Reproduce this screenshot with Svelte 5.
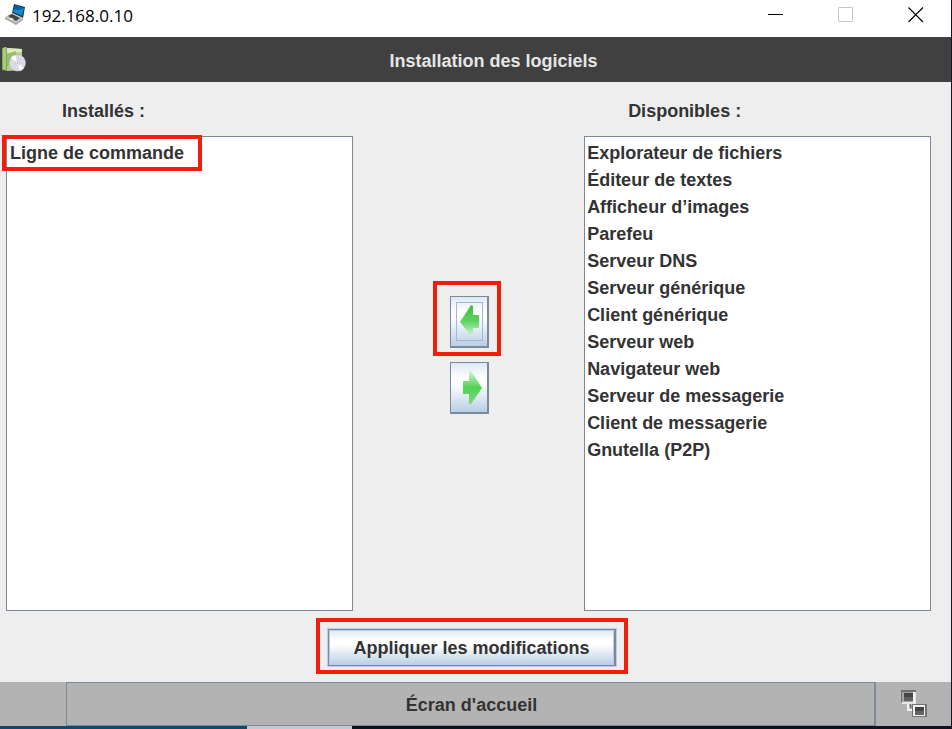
<script lang="ts">
	let installed: string[] = ['Ligne de commande'];
	let available: string[] = [
		'Explorateur de fichiers',
		'Éditeur de textes',
		'Afficheur d’images',
		'Parefeu',
		'Serveur DNS',
		'Serveur générique',
		'Client générique',
		'Serveur web',
		'Navigateur web',
		'Serveur de messagerie',
		'Client de messagerie',
		'Gnutella (P2P)'
	];
	let selected = '';

	function install() {
		if (!available.includes(selected)) return;
		available = available.filter((app) => app !== selected);
		installed = [...installed, selected];
	}

	function uninstall() {
		if (!installed.includes(selected)) return;
		installed = installed.filter((app) => app !== selected);
		available = [...available, selected];
	}
</script>

<div class="window">
	<header class="titlebar">
		<svg class="laptop" width="20" height="22" viewBox="0 0 20 22" aria-hidden="true">
			<path d="M9 1 20 4 18 15 7 10z" fill="#17344f" />
			<path d="M10 2 19 5 17 13 8 9z" fill="#1687cc" />
			<path d="M10 2 19 5 13 7 9 6z" fill="#0b5d9c" />
			<path d="M0 14 7 10 18 15 11 21z" fill="#c9c6c1" />
			<path d="M3 13 7 11 15 15 11 18z" fill="#454442" />
			<path d="M0 14 11 20 18 15v2l-7 5L0 16z" fill="#a9a7a4" />
			<path d="m4 16 3-1 2 1-3 1z" fill="#f2f2f2" />
		</svg>
		<h1>192.168.0.10</h1>
		<div class="window-buttons">
			<button aria-label="Réduire">
				<svg width="16" height="16" viewBox="0 0 16 16"><path d="M0 7.5h15" stroke="#000" /></svg>
			</button>
			<button aria-label="Agrandir" disabled>
				<svg width="16" height="16" viewBox="0 0 16 16"><path d="M.5.5h14v14H.5z" fill="none" stroke="#c8c8c8" /></svg>
			</button>
			<button aria-label="Fermer">
				<svg width="16" height="16" viewBox="0 0 16 16"><path d="m.5.5 14.500 14.500m0-14.500L.5 15" stroke="#000" stroke-width="1.100" /></svg>
			</button>
		</div>
	</header>

	<div class="app-header">
		<svg width="24" height="28" viewBox="0 0 24 28" aria-hidden="true">
			<path d="M0 2 5 1v24l-5-1z" fill="#7fa557" />
			<path d="M1 2 4 1v23l-3-1z" fill="#a9cc7c" />
			<path d="M5 2l15 1v21l-15 1z" fill="#b3cf8d" />
			<path d="M5 2l15 1v3L5 7z" fill="#dcebc6" />
			<path d="m5 8 9-3v6L5 21z" fill="#98be6e" />
			<circle cx="15.500" cy="17" r="8" fill="#dcdce8" stroke="#c4c4d0" stroke-width=".6" />
			<path d="M15.500 17 9 12a8 8 0 0 1 4-3zM15.500 17l6.500 5a8 8 0 0 1-4 3z" fill="#fff" />
			<path d="m15.500 17 4-7a8 8 0 0 1 3 3zM15.500 17l-4 7a8 8 0 0 1-3-3z" fill="#d6d5ec" />
			<circle cx="15.500" cy="17" r="2.200" fill="#f6f6f6" stroke="#bbb" stroke-width=".6" />
			<circle cx="15.500" cy="17" r=".8" fill="#8a8a8a" />
		</svg>
		<h2>Installation des logiciels</h2>
	</div>

	<main>
		<section class="column">
			<h3 id="installed-label">Installés :</h3>
			<ul class="installed" aria-labelledby="installed-label">
				{#each installed as app, i (app)}
					<li>
						<button class="item" class:marked={i === 0} class:selected={app === selected} on:click={() => (selected = app)}>
							{app}
						</button>
					</li>
				{/each}
			</ul>
		</section>

		<div class="transfer">
			<button class="metal arrow marked focused" aria-label="Installer" on:click={install}>
				<svg width="25" height="37" viewBox="0 0 25 37">
					<defs>
						<linearGradient id="green-left" x1="0" y1="0" x2="0" y2="1">
							<stop offset="0" stop-color="#3dbd45" />
							<stop offset=".5" stop-color="#5ad35c" />
							<stop offset="1" stop-color="#d4f3d5" />
						</linearGradient>
					</defs>
					<path d="M3 19 14 2l2 1v9h6v13h-6v8h-2z" fill="url(#green-left)" />
				</svg>
			</button>
			<button class="metal arrow" aria-label="Désinstaller" on:click={uninstall}>
				<svg width="25" height="37" viewBox="0 0 25 37">
					<defs>
						<linearGradient id="green-right" x1="0" y1="0" x2="0" y2="1">
							<stop offset="0" stop-color="#d4f3d5" />
							<stop offset=".5" stop-color="#52d155" />
							<stop offset="1" stop-color="#7ad67d" />
						</linearGradient>
					</defs>
					<path d="M25 19 14 2h-2v10H6v13h6v10h2z" fill="url(#green-right)" />
				</svg>
			</button>
		</div>

		<section class="column">
			<h3 id="available-label">Disponibles :</h3>
			<ul aria-labelledby="available-label">
				{#each available as app (app)}
					<li>
						<button class="item" class:selected={app === selected} on:click={() => (selected = app)}>
							{app}
						</button>
					</li>
				{/each}
			</ul>
		</section>
	</main>

	<div class="actions">
		<button class="metal apply marked">Appliquer les modifications</button>
	</div>

	<footer>
		<button class="home">Écran d'accueil</button>
		<button class="network" aria-label="Réseau">
			<svg width="28" height="28" viewBox="0 0 28 28">
				<path d="M8 14v6h6" fill="none" stroke="#f2f2f2" stroke-width="2" />
				<path d="M10.500 14v3h3" fill="none" stroke="#666" />
				<path d="M1 0h15v14H1z" fill="#6f7071" />
				<path d="M2 12h13V2h1v12H1z" fill="#e6e6e6" />
				<path d="M2 2h12v10H2z" fill="#a5a5a5" />
				<path d="M13 2h2v11h-2z" fill="#f2f2f2" />
				<path d="M4 3h9v8H4z" fill="#434545" />
				<path d="M4 7h9v4H4z" fill="#5e6061" />
				<path d="M12 14h15v13H12z" fill="#717273" />
				<path d="M13 15h12v11H13z" fill="#f2f2f2" />
				<path d="M15 17h9v8h-9z" fill="#434545" />
				<path d="M15 21h9v4h-9z" fill="#626465" />
			</svg>
		</button>
	</footer>
	<div class="desktop-edge"></div>
</div>

<style>
	:global(body) {
		margin: 0;
		background: #eeeeee;
	}

	.window {
		display: flex;
		flex-direction: column;
		min-height: 100vh;
		box-sizing: border-box;
		border-right: 1px solid #16161c;
		background: #eeeeee;
		color: #333333;
		font-family: 'Liberation Sans', Arial, sans-serif;
		font-size: 18px;
		font-weight: bold;
	}

	h1,
	h2,
	h3 {
		margin: 0;
		font-size: 18px;
		line-height: 22px;
	}

	button {
		margin: 0;
		padding: 0;
		border: none;
		background: none;
		color: inherit;
		font: inherit;
		cursor: pointer;
	}

	svg {
		display: block;
	}

	.titlebar {
		display: flex;
		align-items: flex-start;
		height: 37px;
		padding-left: 5px;
		background: #fff;
	}

	.laptop {
		margin-top: 3px;
	}

	.titlebar h1 {
		flex: 1;
		margin: 5px 0 0 7px;
		color: #000;
		font-family: 'Open Sans', 'Noto Sans', sans-serif;
		font-size: 17px;
		font-weight: normal;
	}

	.window-buttons {
		display: flex;
		height: 30px;
	}

	.window-buttons button {
		display: grid;
		place-items: center;
		width: 70px;
	}

	.app-header {
		display: flex;
		align-items: center;
		height: 45px;
		padding-left: 2px;
		background: #404040;
	}

	.app-header h2 {
		flex: 1;
		margin-left: 10px;
		padding-top: 2px;
		color: #e6e6e6;
		text-align: center;
	}

	main {
		flex: 1;
		display: grid;
		grid-template-columns: 3fr 2fr 3fr;
		padding: 0 20px 0 6px;
	}

	.column {
		display: flex;
		flex-direction: column;
		min-width: 0;
	}

	.column h3 {
		padding: 18px 0 14px 44px;
	}

	.column:first-child h3 {
		padding-left: 56px;
	}

	ul {
		flex: 1;
		margin: 0;
		padding: 3px 2px;
		border: 1px solid #7a8a99;
		background: #fff;
		list-style: none;
	}

	.installed {
		padding-left: 3px;
	}

	.item {
		display: block;
		position: relative;
		line-height: 27px;
		text-align: left;
		white-space: nowrap;
	}

	.item.selected {
		background: #b8cfe5;
	}

	/* red frames around the steps to follow */
	.marked {
		position: relative;
	}

	.marked::after {
		content: '';
		position: absolute;
		border: 4px solid #f21e0c;
		pointer-events: none;
	}

	.item.marked::after {
		inset: -5px -18px -4px -8px;
	}

	.transfer {
		display: flex;
		flex-direction: column;
		align-items: center;
		justify-content: center;
		gap: 14px;
		padding: 16px 0 0 2px;
	}

	.metal {
		box-sizing: border-box;
		border: 1px solid #7a8a99;
		background: linear-gradient(#dde8f3 0%, #ffffff 30%, #ffffff 42%, #b8cfe5 100%);
	}

	.arrow {
		display: grid;
		place-items: center;
		width: 39px;
		height: 52px;
		border-right-width: 2px;
		border-bottom-width: 2px;
	}

	.arrow.focused svg {
		outline: 1px solid #a3b8cc;
	}

	.arrow.marked::after {
		inset: -16px -14px -10px -18px;
	}

	.actions {
		display: flex;
		justify-content: center;
		padding: 18px 7px 16px 0;
	}

	.apply {
		height: 37px;
		padding: 2px 24px 0;
		border-right-width: 2px;
		outline: 1px solid #b8cfe5;
		box-shadow: inset 0 0 0 1px #b8cfe5;
	}

	.apply.marked::after {
		inset: -12px -14px -9px -13px;
	}

	footer {
		display: flex;
		height: 44px;
		padding-left: 66px;
		background: #b3b3b3;
	}

	.home {
		flex: 1;
		padding: 3px 0 0 2px;
		border: 1px solid #7a8a99;
		border-right-width: 2px;
	}

	.network {
		display: grid;
		place-items: center;
		width: 75px;
	}

	.desktop-edge {
		height: 3px;
		background: linear-gradient(90deg, #12476e 26%, #c4c8cc 26%, #c4c8cc 37%, #12121c 37%);
	}
</style>
